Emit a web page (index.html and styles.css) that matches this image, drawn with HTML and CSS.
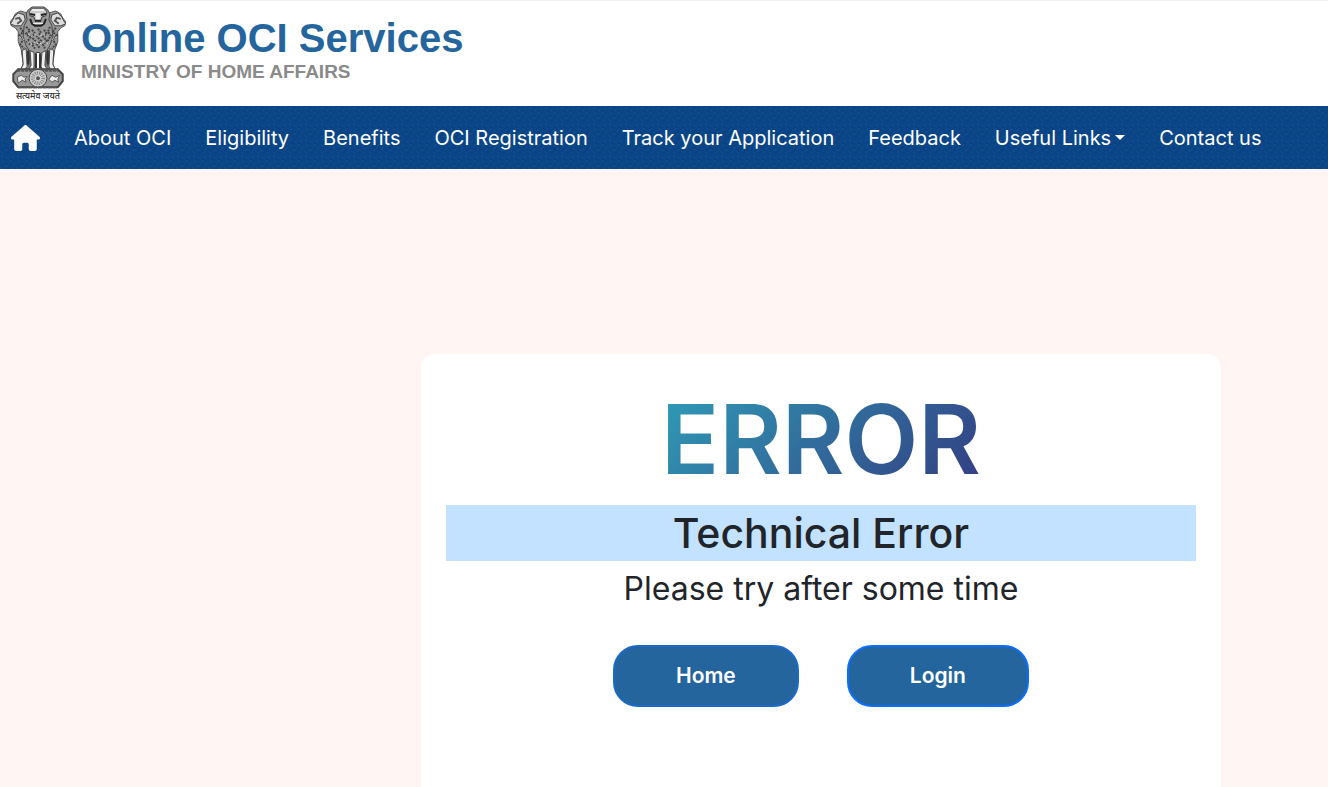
FILE: index.html
```html
<!DOCTYPE html>
<html lang="en">
<head>
<meta charset="utf-8">
<meta name="viewport" content="width=device-width, initial-scale=1">
<title>Online OCI Services</title>
<link rel="stylesheet" href="styles.css">
</head>
<body>
<header class="site-header">
  <svg class="emblem" viewBox="0 0 58 96" role="img" aria-label="State Emblem of India">
    <!-- side lions -->
    <g fill="#999" stroke="#555" stroke-width="1">
      <path d="M18 7 L11 5 6 8 4 12 1 16 2 20 6 22 9 26 9 36 12 44 14 58 12 65 19 65 20 47 22 28Z"/>
      <path d="M40 7 L47 5 52 8 54 12 57 16 56 20 52 22 49 26 49 36 46 44 44 58 46 65 39 65 38 47 36 28Z"/>
    </g>
    <g fill="#ddd" stroke="#444" stroke-width="1">
      <path d="M5 11 L9 7 15 9 16 14 12 20 6 20 1 18 3 15Z"/>
      <path d="M53 11 L49 7 43 9 42 14 46 20 52 20 57 18 55 15Z"/>
      <path d="M6 13l4-1 2 3-4 3M52 13l-4-1-2 3 4 3" fill="none" stroke="#555" stroke-width="2"/>
    </g>
    <!-- central lion -->
    <path d="M19 4 L23 1 35 1 39 4 41 8 40 14 43 20 44 31 41 40 38 45 37 65 32 65 31 47 27 47 26 65 21 65 20 45 17 40 14 31 15 20 18 14 17 8Z" fill="#999" stroke="#444"/>
    <path d="M20 6 L22 3 36 3 38 6 37 10 33 11 32 15 26 15 25 11 21 10Z" fill="#ccc" stroke="#444" stroke-width="1"/>
    <path d="M23 3h12v2H23z M27 7h4v7h-4z" fill="#eee"/>
    <path d="M21 8l5 1M32 9l5-1M26 15h6M21 13l2 5 3 2h6l3-2 2-5" fill="none" stroke="#222" stroke-width="2"/>
    <path d="M24 17h10v1H24z" fill="#fff"/>
    <!-- manes -->
    <path d="M17 21l4 4-4 3 4 4-3 4 4 4 M23 24l3 4-4 3 4 4-3 4 3 4 M29 23l3 4-4 4 4 4-4 4 3 4 M35 24l3 4-4 3 4 4-4 4 2 4 M41 21l-2 5 3 4-3 5 M11 22l3 4-4 4 4 4-3 5 4 4 M47 22l-3 4 4 4-4 4 3 5-4 4" fill="none" stroke="#444" stroke-width="2" stroke-dasharray="2 1"/>
    <path d="M19 28l3 3 4-3 4 3 4-3 4 3 M18 36l4 3 4-3 4 3 4-3 5 2 M10 31l5 3 M48 31l-5 3" fill="none" stroke="#ddd" stroke-width="1" stroke-dasharray="2 2"/>
    <!-- legs -->
    <g fill="#eee" stroke="#444" stroke-width="1">
      <path d="M13 45l4-2 1 18-3 4h-4l3-6z"/>
      <path d="M21 45l4 2 0 14-1 4h-5l3-5z"/>
      <path d="M33 47l4-2 -1 15 3 5h-5l-2-4z"/>
      <path d="M41 43l4 2-1 14 3 6h-5l-2-4z"/>
    </g>
    <path d="M19 45v14 M27 48v15 M31 48v15 M39 45v14" stroke="#333" stroke-width="2"/>
    <!-- abacus -->
    <path d="M9 64h40l5 5v7l-5 6H9l-5-6v-7z" fill="#999" stroke="#444" stroke-width="2"/>
    <path d="M8 65h42" stroke="#555" stroke-width="3" stroke-dasharray="3 1"/>
    <path d="M8 72l4-2 3 2 3-1-2 3 1 3-4-2-4 3z M40 74l3-4 4 2 4-2-2 4 1 3-4-2-3 2z" fill="#eee" stroke="#555" stroke-width="1"/>
    <circle cx="29" cy="73" r="9" fill="#ccc" stroke="#444" stroke-width="1"/>
    <circle cx="29" cy="73" r="5" fill="#ddd" stroke="#888" stroke-width="4" stroke-dasharray="1 1"/>
    <circle cx="29" cy="73" r="2" fill="#555"/>
    <path d="M9 82h40" stroke="#555" stroke-width="2" stroke-dasharray="4 1"/>
    <text class="motto" x="29" y="94" text-anchor="middle">सत्यमेव जयते</text>
  </svg>
  <div class="brand">
    <h1 class="brand-title">Online OCI Services</h1>
    <p class="brand-sub">MINISTRY OF HOME AFFAIRS</p>
  </div>
</header>
<nav class="navbar" aria-label="Main">
  <a class="home-link" href="#" aria-label="Home">
    <svg class="home-icon" viewBox="0 0 576 512" aria-hidden="true"><path fill="#fff" d="M575.800 255.500c0 18-15 32.100-32 32.100h-32l.7 160.200c0 2.700-.2 5.400-.5 8.100V472c0 22.100-17.900 40-40 40H392c-22.100 0-40-17.900-40-40v-88c0-17.700-14.300-32-32-32h-64c-17.700 0-32 14.300-32 32v88c0 22.100-17.900 40-40 40h-80c-22.100 0-40-17.900-40-40V287.600H32c-18 0-32-14-32-32.100 0-9 3-17 10-24L266.400 8c7-7 15-8 22-8s15 2 21 7l255.400 224.500c8 7 12 15 11 24z"/></svg>
  </a>
  <a class="nav-link" href="#">About OCI</a>
  <a class="nav-link" href="#">Eligibility</a>
  <a class="nav-link" href="#">Benefits</a>
  <a class="nav-link" href="#">OCI Registration</a>
  <a class="nav-link" href="#">Track your Application</a>
  <a class="nav-link" href="#">Feedback</a>
  <a class="nav-link dropdown" href="#">Useful Links</a>
  <a class="nav-link" href="#">Contact us</a>
</nav>
<main class="page">
  <section class="card">
    <h2 class="error-code">ERROR</h2>
    <h3 class="error-name">Technical Error</h3>
    <p class="error-text">Please try after some time</p>
    <div class="actions">
      <button class="btn btn-home" type="button">Home</button>
      <button class="btn" type="button">Login</button>
    </div>
  </section>
</main>
</body>
</html>
```
FILE: styles.css
```css
* { box-sizing: border-box; }
body {
  margin: 0;
  height: 100vh;
  overflow: hidden;
  display: flex;
  flex-direction: column;
  background: #fff6f3;
  color: #212529;
  font-family: Inter, "Open Sans", sans-serif;
}
h1, h2, h3, p { margin: 0; }
.site-header {
  display: flex;
  gap: 14px;
  padding: 5px 9px;
  background: #fff;
  border-top: 1px solid #f0f0f0;
}
.emblem { width: 58px; height: 95px; flex: none; }
.motto { font: 500 9px "Noto Sans", "Noto Sans Devanagari", sans-serif; fill: #333; }
.brand {
  padding-top: 9px;
  font-family: "Liberation Sans", Arial, sans-serif;
}
.brand-title { font-size: 40px; line-height: 46px; color: #24659d; }
.brand-sub { font-size: 19px; font-weight: bold; line-height: 22px; color: #8a8a8a; }
.navbar {
  display: flex;
  align-items: center;
  gap: 34px;
  height: 63px;
  flex: none;
  padding: 0 11px;
  background: #0a4587 url("data:image/svg+xml,%3Csvg xmlns='http://www.w3.org/2000/svg' width='16' height='16' fill='none'%3E%3Cpath d='M1 3l3-2M6 5l3-3M12 2l2 2M2 9l2-3M9 9l3-3M5 13l3-2M13 12l2-3M1 14l2 1M11 15l2-1' stroke='%23fff' stroke-opacity='.06'/%3E%3Cpath d='M3 4l3 2M10 4l3 3M5 9l3 2M12 10l-2 3M1 11l2 2M7 15l2-1' stroke='%23000' stroke-opacity='.09'/%3E%3C/svg%3E");
}
.home-link { display: flex; }
.home-icon { width: 29px; height: 26px; }
.nav-link {
  display: flex;
  align-items: center;
  gap: 4px;
  color: #fff;
  font-size: 20px;
  line-height: 28px;
  text-decoration: none;
  white-space: nowrap;
}
.dropdown::after {
  content: "";
  border: 5px solid transparent;
  border-top-color: #fff;
  border-bottom: 0;
}
.page {
  flex: 1;
  display: flex;
  padding: 185px 8% 0 31.7%;
}
.card {
  flex: 1;
  max-width: 800px;
  padding: 24px 25px;
  border-radius: 14px 14px 0 0;
  background: #fff;
  text-align: center;
}
.error-code {
  display: inline-block;
  font-size: 96px;
  font-weight: 600;
  line-height: 122px;
  color: transparent;
  background: linear-gradient(135deg, #2f9fb8, #333a80);
  background-clip: text;
  -webkit-background-clip: text;
}
.error-name {
  margin-top: 5px;
  background: #c3e2ff;
  font-size: 41px;
  font-weight: 500;
  line-height: 56px;
}
.error-text { margin-top: 8px; font-size: 32px; font-weight: 400; line-height: 40px; }
.actions {
  display: flex;
  justify-content: center;
  gap: 48px;
  margin-top: 36px;
}
.btn {
  padding: 14px 61px;
  border: 2px solid #0d6efd;
  border-radius: 25px;
  background: #24659d;
  color: #fff;
  font: 600 21px/30px Inter, "Open Sans", sans-serif;
}
.btn-home { border-color: #1c6ac8; }
```
